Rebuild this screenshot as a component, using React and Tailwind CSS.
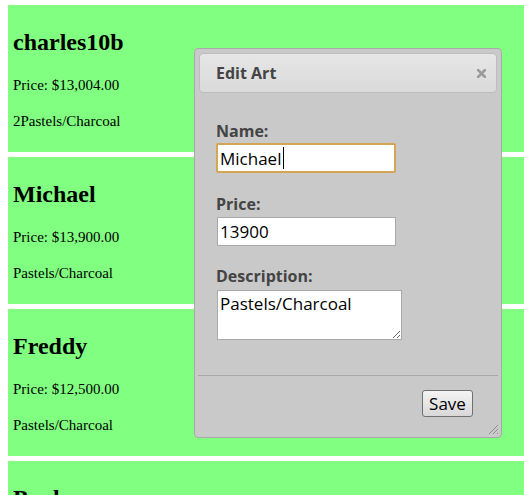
import React from "react";

const arts = [
  { name: "charles10b", price: "$13,004.00", desc: "2Pastels/Charcoal" },
  { name: "Michael", price: "$13,900.00", desc: "Pastels/Charcoal" },
  { name: "Freddy", price: "$12,500.00", desc: "Pastels/Charcoal" },
  { name: "Paul", price: "$11,200.00", desc: "Pastels/Charcoal" },
];

function ArtCard({ art }) {
  return (
    <div className="bg-[#80ff80] pl-[5px] pt-[23px] pb-[22px]">
      <h2 className="text-[24px] leading-[28px] font-bold mb-[20px]">{art.name}</h2>
      <p className="text-[15px] leading-[18px] mb-[18px]">Price: {art.price}</p>
      <p className="text-[15px] leading-[18px]">{art.desc}</p>
    </div>
  );
}

function EditDialog() {
  return (
    <div className="absolute left-[194px] top-[48px] w-[308px] h-[390px] border border-[#a9a9a9] rounded-[4px] bg-[#c9c9c9] p-[4px] flex flex-col font-['Open_Sans',sans-serif] text-[#444]">
      {/* title bar */}
      <div className="h-[40px] shrink-0 border border-[#bdbdbd] rounded-[4px] bg-gradient-to-b from-[#e6e6e6] to-[#dadada] flex items-center justify-between pl-[16px] pr-[10px]">
        <span className="text-[16px] font-bold">Edit Art</span>
        <svg width="9" height="9" viewBox="0 0 9 9">
          <path d="M1 1 L8 8 M8 1 L1 8" stroke="#9a9a9a" strokeWidth="2.6" strokeLinecap="square" />
        </svg>
      </div>

      {/* form */}
      <div className="flex-1 pl-[17px] pt-[28px]">
        <label className="block text-[16px] leading-5 font-bold">Name:</label>
        <div className="relative mt-[2px] w-[180px]">
          <input
            readOnly
            value="Michael"
            className="block w-[180px] h-[30px] border-2 border-[#d4a552] rounded-[2px] bg-white px-[2px] text-[17px] text-black outline-none"
          />
          <span className="absolute left-[67px] top-[4px] w-[1px] h-[22px] bg-black" />
        </div>

        <label className="block mt-[21px] text-[16px] leading-5 font-bold">Price:</label>
        <input
          readOnly
          value="13900"
          className="block mt-[3px] ml-[1px] w-[179px] h-[29px] border border-[#a9a9a9] bg-white px-[2px] text-[17px] text-black outline-none"
        />

        <label className="block mt-[20px] text-[16px] leading-5 font-bold">Description:</label>
        <textarea
          readOnly
          value="Pastels/Charcoal"
          className="block mt-[4px] ml-[1px] w-[185px] h-[50px] border border-[#a9a9a9] bg-white px-[2px] pt-[3px] pb-[1px] text-[17px] leading-5 text-black outline-none resize"
        />
      </div>

      {/* footer */}
      <div className="h-[58px] shrink-0 -mx-[1px] border-t border-[#a8a8a8] flex justify-end items-start pt-[14px] pr-[25px]">
        <button className="h-[27px] w-[51px] border border-[#707070] rounded-[3px] bg-gradient-to-b from-[#f4f4f4] to-[#d8d8d8] text-[17px] leading-none text-black">
          Save
        </button>
      </div>

      <svg className="absolute right-[2px] bottom-[2px]" width="11" height="11" viewBox="0 0 11 11">
        <path d="M10 1 L1 10 M10 5 L5 10 M10 9 L9 10" stroke="#8f8f8f" strokeWidth="1" />
      </svg>
    </div>
  );
}

export default function App() {
  return (
    <div className="relative w-[524px] h-[495px] overflow-hidden bg-white font-['Liberation_Serif',serif] text-black">
      <div className="flex flex-col gap-[5px] pt-[5px] pl-2">
        {arts.map((a) => (
          <ArtCard key={a.name} art={a} />
        ))}
      </div>
      <EditDialog />
    </div>
  );
}
